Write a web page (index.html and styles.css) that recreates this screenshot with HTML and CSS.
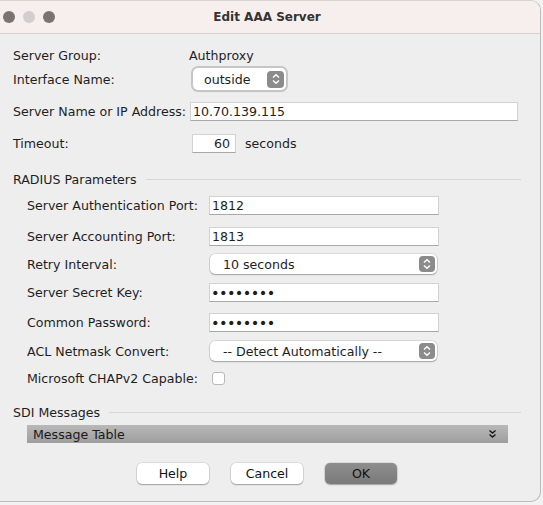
FILE: index.html
```html
<!DOCTYPE html>
<html lang="en">
<head>
    <meta charset="UTF-8">
    <meta name="viewport" content="width=device-width, initial-scale=1.0">
    <title>Edit AAA Server</title>
    <link rel="stylesheet" href="styles.css">
</head>
<body>
    <div class="window">
        <div class="titlebar">
            <div class="lights">
                <span class="light dark"></span>
                <span class="light pale"></span>
                <span class="light dark"></span>
            </div>
            <div class="title">Edit AAA Server</div>
            <div></div>
        </div>

        <div class="content">
            <div class="row r-group">
                <span class="label">Server Group:</span>
                <span class="value">Authproxy</span>
            </div>
            <div class="row r-iface">
                <span class="label">Interface Name:</span>
                <div class="select iface">
                    <span class="text">outside</span>
                    <span class="stepper"><svg width="10" height="12" viewBox="0 0 10 12"><path d="M2 4.5 L5 1.8 L8 4.5 M2 7.5 L5 10.2 L8 7.5" fill="none" stroke="#fff" stroke-width="1.4"/></svg></span>
                </div>
            </div>
            <div class="row r-name">
                <span class="label">Server Name or IP Address:</span>
                <div class="field wide">10.70.139.115</div>
            </div>
            <div class="row r-timeout">
                <span class="label">Timeout:</span>
                <div class="field short">60</div>
                <span class="unit">seconds</span>
            </div>

            <div class="section s-radius">
                <span>RADIUS Parameters</span>
                <span class="line"></span>
            </div>
            <div class="group">
                <div class="row r-auth">
                    <span class="label">Server Authentication Port:</span>
                    <div class="field port">1812</div>
                </div>
                <div class="row r-acct">
                    <span class="label">Server Accounting Port:</span>
                    <div class="field port">1813</div>
                </div>
                <div class="row r-retry">
                    <span class="label">Retry Interval:</span>
                    <div class="select long">
                        <span class="text">10 seconds</span>
                        <span class="stepper"><svg width="10" height="12" viewBox="0 0 10 12"><path d="M2 4.5 L5 1.8 L8 4.5 M2 7.5 L5 10.2 L8 7.5" fill="none" stroke="#fff" stroke-width="1.4"/></svg></span>
                    </div>
                </div>
                <div class="row r-secret">
                    <span class="label">Server Secret Key:</span>
                    <div class="field port dots">••••••••</div>
                </div>
                <div class="row r-common">
                    <span class="label">Common Password:</span>
                    <div class="field port dots">••••••••</div>
                </div>
                <div class="row r-acl">
                    <span class="label">ACL Netmask Convert:</span>
                    <div class="select long">
                        <span class="text">-- Detect Automatically --</span>
                        <span class="stepper"><svg width="10" height="12" viewBox="0 0 10 12"><path d="M2 4.5 L5 1.8 L8 4.5 M2 7.5 L5 10.2 L8 7.5" fill="none" stroke="#fff" stroke-width="1.4"/></svg></span>
                    </div>
                </div>
                <div class="row r-chap">
                    <span class="label">Microsoft CHAPv2 Capable:</span>
                    <span class="checkbox"></span>
                </div>
            </div>

            <div class="section s-sdi">
                <span>SDI Messages</span>
                <span class="line"></span>
            </div>
            <div class="msgbar">
                <span>Message Table</span>
                <svg width="9" height="10" viewBox="0 0 9 10"><path d="M1.5 1.5 L4.5 4 L7.5 1.5 M1.5 5.5 L4.5 8 L7.5 5.5" fill="none" stroke="#1a1a1a" stroke-width="1.5"/></svg>
            </div>

            <div class="buttons">
                <button class="btn">Help</button>
                <button class="btn">Cancel</button>
                <button class="btn default">OK</button>
            </div>
        </div>
    </div>
</body>
</html>
```

FILE: styles.css
```css
body {
    margin: 0;
    background-color: #f2f2f2;
    font-family: "DejaVu Sans", sans-serif;
    font-size: 12.6px;
    color: #1e1e1e;
}
.window {
    width: 541px;
    height: 502px;
    box-sizing: border-box;
    background-color: #eeeeee;
    border: 1px solid #bcbcbc;
    border-top-color: #d9d3d2;
    border-left: none;
    border-radius: 0 10px 10px 0;
    overflow: hidden;
}
.titlebar {
    height: 32px;
    background-color: #f7efed;
    border-bottom: 1px solid #d8d0cf;
    display: grid;
    grid-template-columns: 1fr auto 1fr;
    align-items: center;
}
.lights { display: flex; gap: 8px; padding-left: 3px; }
.light { width: 12px; height: 12px; border-radius: 50%; }
.light.dark { background-color: #7b7272; }
.light.pale { background-color: #d3cece; }
.title { font-weight: bold; font-size: 12px; color: #333; padding-right: 6px; }

.content { padding: 0 19px 0 13px; }
.row { display: flex; align-items: center; height: 19px; white-space: nowrap; }
.label { width: 177px; flex-shrink: 0; }
.group { padding-left: 14px; }
.group .label { width: 182px; }

.r-group { margin-top: 11px; height: 20px; }
.r-group .value { margin-left: -1px; }
.r-iface { margin-top: 3px; height: 22px; }
.r-name { margin-top: 12px; }
.r-timeout { margin-top: 13px; }
.r-auth { margin-top: 9px; }
.r-acct { margin-top: 12px; }
.r-retry { margin-top: 8px; height: 20px; }
.r-secret { margin-top: 9px; }
.r-common { margin-top: 11px; }
.r-acl { margin-top: 9px; height: 20px; }
.r-chap { margin-top: 7px; height: 20px; }

.field {
    height: 19px;
    box-sizing: border-box;
    background-color: #fff;
    border: 1px solid #d2d2d2;
    border-bottom-color: #a8a8a8;
    padding: 0 2px;
    display: flex;
    align-items: center;
}
.field.wide { width: 328px; }
.field.short { width: 44px; margin-left: 2px; justify-content: flex-end; padding-right: 5px; }
.field.port { width: 230px; }
.field.dots { font-size: 14.5px; letter-spacing: -0.6px; padding-left: 1px; }
.unit { margin-left: 9px; }

.select {
    height: 20px;
    box-sizing: border-box;
    background-color: #fff;
    border-radius: 5px;
    box-shadow: 0 0 0 0.5px rgba(0,0,0,0.18), 0 1px 1.5px rgba(0,0,0,0.25);
    display: flex;
    align-items: center;
    padding: 0 2px 0 13px;
}
.select .text { flex: 1; }
.select.long { width: 227px; margin-left: 1px; }
.select.iface {
    width: 93px;
    height: 22px;
    margin-left: 3px;
    padding-left: 11px;
    box-shadow: 0 0 0 2px #c6c6c6, 0 1px 2px rgba(0,0,0,0.3);
}
.stepper {
    width: 16px;
    height: 16px;
    border-radius: 4px;
    background-color: #8b8b8b;
    display: flex;
    align-items: center;
    justify-content: center;
}
.iface .stepper { width: 17px; height: 17px; }

.checkbox {
    width: 13px;
    height: 13px;
    box-sizing: border-box;
    margin-left: 3px;
    background-color: #fff;
    border: 1px solid #b9b9b9;
    border-radius: 3px;
}

.section { display: flex; align-items: center; gap: 9px; height: 16px; }
.section .line { flex: 1; height: 1px; background-color: #d6d6d6; }
.s-radius { margin-top: 18px; }
.s-sdi { margin-top: 16px; }

.msgbar {
    margin: 5px 13px 0 14px;
    height: 18px;
    background: linear-gradient(#b9b9b9, #9e9e9e);
    display: flex;
    align-items: center;
    justify-content: space-between;
    padding: 0 11px 0 6px;
    color: #1a1a1a;
}

.buttons { display: flex; justify-content: center; gap: 22px; margin-top: 20px; }
.btn {
    width: 72px;
    height: 21px;
    font-family: "DejaVu Sans", sans-serif;
    font-size: 12.6px;
    color: #111;
    background-color: #fff;
    border: none;
    border-radius: 5px;
    box-shadow: 0 0 0 0.5px rgba(0,0,0,0.15), 0 1px 1.5px rgba(0,0,0,0.28);
    padding: 0;
}
.btn.default { background: linear-gradient(#8e8e8e, #7a7a7a); }
```
